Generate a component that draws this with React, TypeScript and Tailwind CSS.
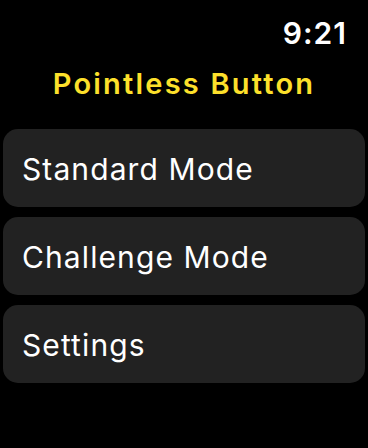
export default function App() {
  const items = ["Standard Mode", "Challenge Mode", "Settings"];
  return (
    <div
      className="w-[368px] h-[448px] bg-black overflow-hidden flex flex-col"
      style={{ fontFamily: "Inter, 'Noto Sans', sans-serif" }}
    >
      <div className="flex justify-end pr-[21px] pt-[14px] h-[54px]">
        <span className="text-white text-[30px] leading-[38px] font-semibold tracking-[1px]">9:21</span>
      </div>
      <div className="flex justify-center h-[75px] pt-[11px]">
        <span className="text-[#fde02b] text-[29px] leading-[38px] font-semibold tracking-[2.2px]">Pointless Button</span>
      </div>
      <div className="flex flex-col gap-[10px] px-[3px]">
        {items.map((label) => (
          <div key={label} className="h-[78px] rounded-[15px] bg-[#222222] flex items-center pl-[19px] pt-[2px]">
            <span className="text-white text-[30px] leading-[38px] font-normal tracking-[1.1px]">{label}</span>
          </div>
        ))}
      </div>
    </div>
  );
}
